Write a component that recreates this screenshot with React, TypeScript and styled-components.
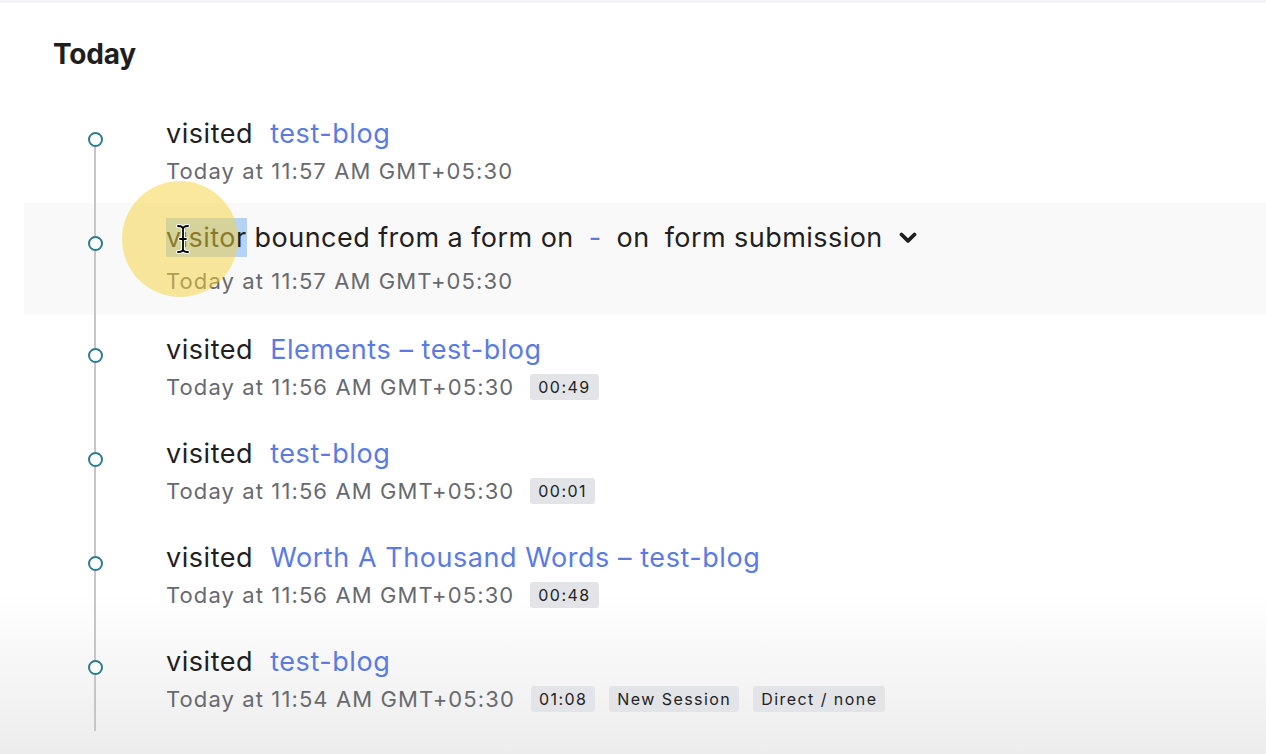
import React from 'react'
import styled, { createGlobalStyle } from 'styled-components'

interface Activity {
	verb: string
	target: string
	time: string
	tags?: string[]
}

const activities: Activity[] = [
	{ verb: 'visited', target: 'test-blog', time: 'Today at 11:57 AM GMT+05:30' },
	{ verb: 'visited', target: 'Elements – test-blog', time: 'Today at 11:56 AM GMT+05:30', tags: ['00:49'] },
	{ verb: 'visited', target: 'test-blog', time: 'Today at 11:56 AM GMT+05:30', tags: ['00:01'] },
	{ verb: 'visited', target: 'Worth A Thousand Words – test-blog', time: 'Today at 11:56 AM GMT+05:30', tags: ['00:48'] },
	{ verb: 'visited', target: 'test-blog', time: 'Today at 11:54 AM GMT+05:30', tags: ['01:08', 'New Session', 'Direct / none'] },
]

const App: React.FC = () => {
	return (
		<>
			<GlobalStyle />
			<Page>
				<Heading>Today</Heading>
				<Timeline>
					<Row first>
						<Rail first>
							<RailTop />
							<Dot />
							<RailBottom />
						</Rail>
						<Content>
							<Title>
								<span>{activities[0].verb}</span>
								<Target>{activities[0].target}</Target>
							</Title>
							<Meta>
								<Time>{activities[0].time}</Time>
							</Meta>
						</Content>
					</Row>

					<Row highlighted>
						<Rail>
							<RailTop />
							<Dot />
							<RailBottom />
						</Rail>
						<Content>
							<Title tall>
								<span>
									<Selected>visitor</Selected> bounced from a form on
								</span>
								<Target>-</Target>
								<span>on</span>
								<span>form submission</span>
								<Toggle aria-label="expand">
									<svg width="18" height="12" viewBox="0 0 18 12">
										<path
											d="M2.5 2.5 L9 8.8 L15.5 2.5"
											fill="none"
											stroke="#1f1f1f"
											strokeWidth="3.8"
											strokeLinecap="round"
											strokeLinejoin="round"
										/>
									</svg>
								</Toggle>
							</Title>
							<Meta spaced>
								<Time>Today at 11:57 AM GMT+05:30</Time>
							</Meta>
						</Content>
						<Spotlight />
						<Cursor width="14" height="30" viewBox="0 0 14 30">
							<path
								d="M2 2 Q7 2 7 5 Q7 2 12 2 M7 5 L7 25 M2 28 Q7 28 7 25 Q7 28 12 28 M4 15 L10 15"
								fill="none"
								stroke="#fff"
								strokeWidth="4"
								strokeLinecap="round"
							/>
							<path
								d="M2 2 Q7 2 7 5 Q7 2 12 2 M7 5 L7 25 M2 28 Q7 28 7 25 Q7 28 12 28 M4 15 L10 15"
								fill="none"
								stroke="#000"
								strokeWidth="1.8"
								strokeLinecap="round"
							/>
						</Cursor>
					</Row>

					{activities.slice(1).map((a, i) => (
						<Row key={i}>
							<Rail>
								<RailTop />
								<Dot />
								<RailBottom />
							</Rail>
							<Content>
								<Title>
									<span>{a.verb}</span>
									<Target>{a.target}</Target>
								</Title>
								<Meta>
									<Time>{a.time}</Time>
									<Tags>
										{a.tags?.map((t) => (
											<Tag key={t}>{t}</Tag>
										))}
									</Tags>
								</Meta>
							</Content>
						</Row>
					))}
				</Timeline>
			</Page>
		</>
	)
}

export default App

const GlobalStyle = createGlobalStyle`
	html, body {
		margin: 0;
		padding: 0;
		background: #fff;
	}
	body {
		font-family: Inter, "Noto Sans", "Liberation Sans", sans-serif;
		color: #1f1f1f;
		-webkit-font-smoothing: antialiased;
	}
`

const Page = styled.div`
	min-height: 754px;
	box-sizing: border-box;
	border-top: 3px solid #f3f4f6;
	overflow: hidden;
	background: linear-gradient(
		to bottom,
		#ffffff 0,
		#ffffff 590px,
		#ececec 754px
	);
`

const Heading = styled.h2`
	margin: 0;
	padding: 34px 0 0 53px;
	height: 40px;
	font-size: 28px;
	line-height: 34px;
	font-weight: 700;
	letter-spacing: -0.2px;
	color: #1e1e1e;
`

const Timeline = styled.div`
	margin: 22px 0 0 24px;
	display: flex;
	flex-direction: column;
`

const Row = styled.div<{ highlighted?: boolean; first?: boolean }>`
	position: relative;
	display: flex;
	height: ${({ highlighted }) => (highlighted ? '112px' : '104px')};
	background: ${({ highlighted }) => (highlighted ? '#f9f9f9' : 'transparent')};
`

const Rail = styled.div<{ first?: boolean }>`
	width: 142px;
	flex-shrink: 0;
	display: flex;
	flex-direction: column;
	align-items: center;

	& > div:first-child {
		visibility: ${({ first }) => (first ? 'hidden' : 'visible')};
	}
`

const RailTop = styled.div`
	width: 2px;
	height: 33px;
	background: #c6c6c6;
`

const RailBottom = styled.div`
	width: 2px;
	flex: 1;
	background: #c6c6c6;
`

const Dot = styled.span`
	width: 15px;
	height: 15px;
	box-sizing: border-box;
	border: 2px solid #2f7b8b;
	border-radius: 50%;
	background: #fff;
`

const Content = styled.div`
	display: flex;
	flex-direction: column;
	padding-top: 19px;
`

const Title = styled.div<{ tall?: boolean }>`
	display: flex;
	align-items: center;
	gap: ${({ tall }) => (tall ? '15px' : '17px')};
	height: ${({ tall }) => (tall ? '38px' : '32px')};
	margin-top: ${({ tall }) => (tall ? '-3px' : '0')};
	font-size: 27px;
	line-height: 32px;
	letter-spacing: ${({ tall }) => (tall ? '0.45px' : '0.55px')};
	color: #1f1f1f;
	white-space: nowrap;
`

const Target = styled.span`
	color: #5b7be3;
`

const Selected = styled.span`
	padding: 3px 0;
	background: #b5d3f6;
`

const Toggle = styled.button`
	display: flex;
	align-items: center;
	justify-content: center;
	width: 20px;
	height: 38px;
	padding: 0;
	border: none;
	background: transparent;
`

const Meta = styled.div<{ spaced?: boolean }>`
	display: flex;
	align-items: center;
	gap: 16px;
	height: 26px;
	margin-top: ${({ spaced }) => (spaced ? '11px' : '8px')};
`

const Time = styled.span`
	font-size: 22px;
	line-height: 26px;
	letter-spacing: 1.1px;
	color: #676a6e;
	white-space: nowrap;
`

const Tags = styled.div`
	display: flex;
	gap: 14px;
`

const Tag = styled.span`
	display: inline-flex;
	align-items: center;
	height: 26px;
	padding: 0 8px;
	border-radius: 3px;
	background: #e3e4e7;
	font-size: 16px;
	letter-spacing: 0.09em;
	color: #222;
	white-space: nowrap;
`

const Spotlight = styled.span`
	position: absolute;
	left: 98px;
	top: -22px;
	width: 116px;
	height: 116px;
	border-radius: 50%;
	background: rgba(245, 212, 60, 0.5);
	pointer-events: none;
`

const Cursor = styled.svg`
	position: absolute;
	left: 152px;
	top: 21px;
	pointer-events: none;
`
